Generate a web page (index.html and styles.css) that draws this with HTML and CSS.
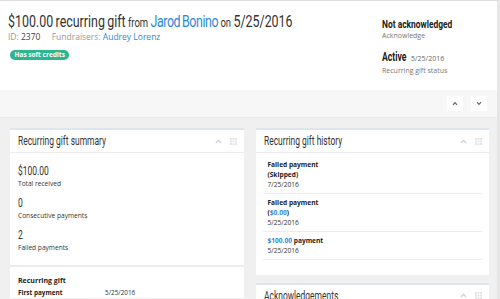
FILE: index.html
```html
<!DOCTYPE html>
<html>
<head>
<meta charset="utf-8">
<link rel="stylesheet" href="styles.css">
</head>
<body>
<div class="page">
  <header class="hdr">
    <div class="hdr-main">
      <h1 class="title"><span class="title-in"><span class="big">$100.00 recurring gift</span> <span class="small">from</span> <a class="big link name">Jarod Bonino</a> <span class="small">on</span> <span class="big">5/25/2016</span></span></h1>
      <div class="meta">
        <span class="lbl">ID:</span> <span class="val">2370</span>
        <span class="lbl gap">Fundraisers:</span> <a class="link">Audrey Lorenz</a>
      </div>
      <span class="badge">Has soft credits</span>
    </div>
    <div class="hdr-side">
      <div class="status">
        <div class="status-main"><span class="sm-in ack">Not acknowledged</span></div>
        <div class="status-sub">Acknowledge</div>
      </div>
      <div class="status status2">
        <div class="status-main"><span class="sm-in act">Active</span> <span class="status-date">5/25/2016</span></div>
        <div class="status-sub">Recurring gift status</div>
      </div>
    </div>
  </header>

  <div class="toolbar">
    <button class="tbtn" aria-label="Collapse all">
      <svg width="6" height="5" viewBox="0 0 6 5"><path d="M1 3.8 L3 1.6 L5 3.8" fill="none" stroke="#666" stroke-width="1.2"/></svg>
    </button>
    <button class="tbtn" aria-label="Expand all">
      <svg width="6" height="5" viewBox="0 0 6 5"><path d="M1 1.2 L3 3.4 L5 1.2" fill="none" stroke="#666" stroke-width="1.2"/></svg>
    </button>
  </div>

  <div class="tiles">
    <div class="col">
      <section class="panel">
        <div class="panel-hd">
          <h2 class="panel-title"><span class="pt-in">Recurring gift summary</span></h2>
          <div class="panel-tools">
            <svg width="7" height="5" viewBox="0 0 7 5"><path d="M0.8 4 L3.5 1.3 L6.2 4" fill="none" stroke="#cfcfcf" stroke-width="1.2"/></svg>
            <svg width="7" height="7" viewBox="0 0 7 7" fill="#e0e0e0"><rect x="0" y="0" width="1.8" height="1.8"/><rect x="2.6" y="0" width="1.8" height="1.8"/><rect x="5.2" y="0" width="1.8" height="1.8"/><rect x="0" y="2.6" width="1.8" height="1.8"/><rect x="2.6" y="2.6" width="1.8" height="1.8"/><rect x="5.2" y="2.6" width="1.8" height="1.8"/><rect x="0" y="5.2" width="1.8" height="1.8"/><rect x="2.6" y="5.2" width="1.8" height="1.8"/><rect x="5.2" y="5.2" width="1.8" height="1.8"/></svg>
          </div>
        </div>
        <div class="panel-bd kpis">
          <div class="kpi">
            <div class="kpi-val"><span class="kv-in">$100.00</span></div>
            <div class="kpi-lbl">Total received</div>
          </div>
          <div class="kpi">
            <div class="kpi-val"><span class="kv-in">0</span></div>
            <div class="kpi-lbl">Consecutive payments</div>
          </div>
          <div class="kpi">
            <div class="kpi-val"><span class="kv-in">2</span></div>
            <div class="kpi-lbl">Failed payments</div>
          </div>
        </div>
        <div class="panel-bd section2">
          <div class="sec-title">Recurring gift</div>
          <div class="row"><span class="row-lbl">First payment</span><span class="row-val">5/25/2016</span></div>
        </div>
      </section>
    </div>
    <div class="col">
      <section class="panel">
        <div class="panel-hd">
          <h2 class="panel-title"><span class="pt-in">Recurring gift history</span></h2>
          <div class="panel-tools">
            <svg width="7" height="5" viewBox="0 0 7 5"><path d="M0.8 4 L3.5 1.3 L6.2 4" fill="none" stroke="#cfcfcf" stroke-width="1.2"/></svg>
            <svg width="7" height="7" viewBox="0 0 7 7" fill="#e0e0e0"><rect x="0" y="0" width="1.8" height="1.8"/><rect x="2.6" y="0" width="1.8" height="1.8"/><rect x="5.2" y="0" width="1.8" height="1.8"/><rect x="0" y="2.6" width="1.8" height="1.8"/><rect x="2.6" y="2.6" width="1.8" height="1.8"/><rect x="5.2" y="2.6" width="1.8" height="1.8"/><rect x="0" y="5.2" width="1.8" height="1.8"/><rect x="2.6" y="5.2" width="1.8" height="1.8"/><rect x="5.2" y="5.2" width="1.8" height="1.8"/></svg>
          </div>
        </div>
        <div class="history">
          <div class="hist">
            <div class="hist-t">Failed payment</div>
            <div class="hist-t">(Skipped)</div>
            <div class="hist-d">7/25/2016</div>
          </div>
          <div class="hist">
            <div class="hist-t">Failed payment</div>
            <div class="hist-t">(<a class="link">$0.00</a>)</div>
            <div class="hist-d">5/25/2016</div>
          </div>
          <div class="hist">
            <div class="hist-t"><a class="link">$100.00</a> payment</div>
            <div class="hist-d">5/25/2016</div>
          </div>
        </div>
      </section>
      <section class="panel">
        <div class="panel-hd">
          <h2 class="panel-title"><span class="pt-in">Acknowledgements</span></h2>
          <div class="panel-tools">
            <svg width="7" height="5" viewBox="0 0 7 5"><path d="M0.8 4 L3.5 1.3 L6.2 4" fill="none" stroke="#cfcfcf" stroke-width="1.2"/></svg>
            <svg width="7" height="7" viewBox="0 0 7 7" fill="#e0e0e0"><rect x="0" y="0" width="1.8" height="1.8"/><rect x="2.6" y="0" width="1.8" height="1.8"/><rect x="5.2" y="0" width="1.8" height="1.8"/><rect x="0" y="2.6" width="1.8" height="1.8"/><rect x="2.6" y="2.6" width="1.8" height="1.8"/><rect x="5.2" y="2.6" width="1.8" height="1.8"/><rect x="0" y="5.2" width="1.8" height="1.8"/><rect x="2.6" y="5.2" width="1.8" height="1.8"/><rect x="5.2" y="5.2" width="1.8" height="1.8"/></svg>
          </div>
        </div>
      </section>
    </div>
  </div>
</div>
</body>
</html>
```

FILE: styles.css
```css
html, body {
  margin: 0;
  padding: 0;
  background: #fff;
}
body {
  font-family: "Open Sans", "Liberation Sans", sans-serif;
  color: #333;
}
.page {
  width: 500px;
  height: 299px;
  overflow: hidden;
  box-sizing: border-box;
  border-top: 1px solid #dcdcdc;
  border-right: 3px solid #e6e6e6;
  background: #f0f0f0;
}
.link {
  color: #2f88d4;
  text-decoration: none;
}

/* header */
.hdr {
  display: flex;
  background: #fff;
  height: 89px;
  box-sizing: border-box;
  padding: 10px 0 0 8px;
}
.hdr-main {
  flex: 1;
  min-width: 0;
}
.title {
  margin: 0;
  font-family: Roboto, "Liberation Sans", sans-serif;
  font-weight: normal;
  font-size: 17px;
  color: #333;
  line-height: 20px;
  white-space: nowrap;
}
.title-in {
  display: inline-block;
  transform: scaleX(0.731);
  transform-origin: 0 50%;
  word-spacing: -1px;
}
.title .big {
  font-size: 17px;
}
.title .small {
  font-size: 13px;
}
.title .name {
  letter-spacing: -0.6px;
}
.meta {
  font-size: 8.5px;
  margin-top: -1px;
  color: #999;
  line-height: 10px;
}
.meta .val {
  color: #444;
}
.meta .gap {
  margin-left: 9px;
}
.badge {
  display: block;
  width: fit-content;
  margin: 8px 0 0 2px;
  background: #2db58e;
  color: #fff;
  font-size: 6.5px;
  font-weight: 700;
  line-height: 10px;
  padding: 0 4.5px;
  border-radius: 5px;
}
.hdr-side {
  width: 115px;
  padding-top: 5px;
}
.status-main {
  font-family: Roboto, "Liberation Sans", sans-serif;
  font-weight: 700;
  color: #222;
  line-height: 14px;
  white-space: nowrap;
}
.sm-in {
  display: inline-block;
  transform-origin: 0 50%;
}
.ack {
  font-size: 11px;
  transform: scaleX(0.765);
}
.act {
  font-size: 12px;
  transform: scaleX(0.72);
  margin-right: -9px;
}
.status-date {
  font-family: "Open Sans", sans-serif;
  font-weight: normal;
  font-size: 7px;
  color: #666;
}
.status-sub {
  font-size: 7px;
  color: #777;
  line-height: 9px;
  margin-top: -1px;
}
.status2 {
  margin-top: 9px;
}
.status2 .status-sub {
  margin-top: 0;
}

/* toolbar */
.toolbar {
  height: 28px;
  box-sizing: border-box;
  background: #f7f7f7;
  border-bottom: 1px solid #ebebeb;
  display: flex;
  justify-content: flex-end;
  gap: 8px;
  padding: 6px 10px 0 0;
}
.tbtn {
  width: 16px;
  height: 15px;
  background: #fff;
  border: none;
  padding: 0;
  display: flex;
  align-items: center;
  justify-content: center;
}

/* tiles */
.tiles {
  display: flex;
  gap: 12px;
  padding: 10px 8px 0 10px;
}
.col {
  flex: 1;
  display: flex;
  flex-direction: column;
  gap: 8px;
}
.panel {
  background: #fff;
  border-top: 2px solid #dde6ee;
}
.panel-hd {
  display: flex;
  align-items: center;
  height: 22px;
  padding: 0 7px 0 8px;
  border-bottom: 1px solid #ececec;
}
.panel-title {
  flex: 1;
  min-width: 0;
  margin: 0;
  font-family: Roboto, "Liberation Sans", sans-serif;
  font-weight: normal;
  font-size: 13px;
  line-height: 16px;
  color: #333;
  white-space: nowrap;
}
.pt-in {
  display: inline-block;
  transform: scaleX(0.65);
  transform-origin: 0 50%;
}
.panel-tools {
  display: flex;
  align-items: center;
  gap: 8px;
}
.panel-bd {
  padding: 0 8px;
}
.kpis {
  padding-top: 11px;
  padding-bottom: 12px;
}
.kpi + .kpi {
  margin-top: 7px;
}
.kpi-val {
  font-family: Roboto, "Liberation Sans", sans-serif;
  font-size: 13px;
  line-height: 14px;
  color: #333;
}
.kv-in {
  display: inline-block;
  transform: scaleX(0.65);
  transform-origin: 0 50%;
}
.kpi-lbl {
  font-size: 6.6px;
  line-height: 11px;
  color: #333;
}
.section2 {
  border-top: 2px solid #ececec;
  padding-top: 9px;
}
.sec-title {
  font-size: 7px;
  font-weight: 700;
  line-height: 10px;
  color: #222;
  margin-bottom: 2px;
}
.row {
  display: flex;
  font-size: 6.4px;
  line-height: 10px;
}
.row-lbl {
  width: 87px;
  font-weight: 700;
  color: #222;
}
.history {
  padding: 2px 7px 15px;
}
.hist {
  border-bottom: 1px solid #ececec;
  padding: 4px 5px 3px;
}
.hist:first-child {
  padding-top: 4.5px;
}
.hist-t {
  font-size: 6.6px;
  font-weight: 700;
  line-height: 10px;
  color: #222;
}
.hist-d {
  font-size: 6.6px;
  line-height: 10px;
  color: #333;
}
```
